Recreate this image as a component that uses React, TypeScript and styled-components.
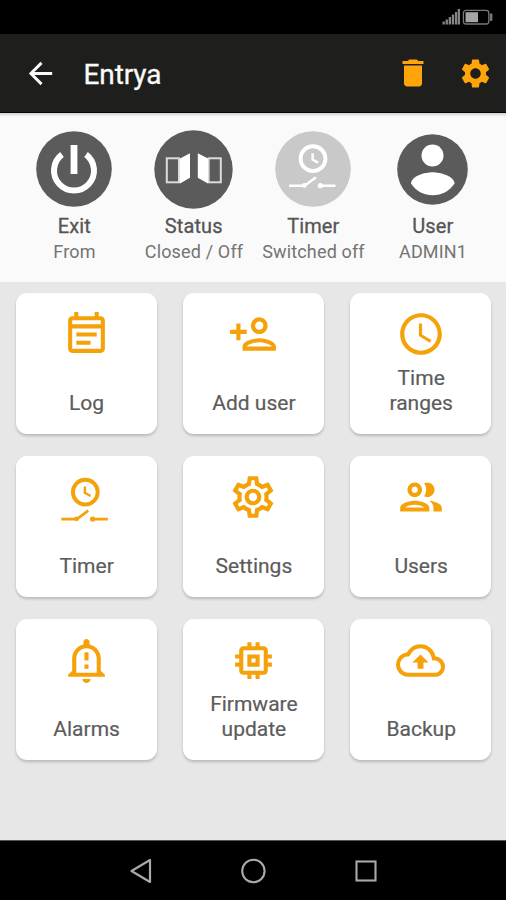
import React from "react";
import styled, { createGlobalStyle } from "styled-components";
import {
  MdArrowBack,
  MdDelete,
  MdSettings,
  MdOutlineEventNote,
  MdOutlinePersonAdd,
  MdAccessTime,
  MdOutlineSettings,
  MdOutlineNotificationImportant,
  MdOutlineMemory,
  MdOutlineBackup,
} from "react-icons/md";

const ORANGE = "#f5a10a";

const GlobalStyle = createGlobalStyle`
  * { box-sizing: border-box; }
  body { margin: 0; background: #e7e7e7; font-family: Roboto, "Liberation Sans", sans-serif; }
`;

const Screen = styled.div`
  display: flex;
  flex-direction: column;
  width: 506px;
  height: 900px;
  overflow: hidden;
  background: #e7e7e7;
`;

const StatusBar = styled.div`
  display: flex;
  justify-content: flex-end;
  align-items: center;
  flex: none;
  height: 34px;
  padding-right: 13px;
  background: #000;
`;

const Toolbar = styled.header`
  display: flex;
  align-items: center;
  flex: none;
  height: 79px;
  padding: 0 13px 0 22.5px;
  background: #1e1e1c;
  border-bottom: 1px solid #050505;
  color: #fafafa;
`;

const Title = styled.h1`
  flex: 1;
  margin: 3px 0 0 26px;
  font-size: 28px;
  font-weight: 400;
  line-height: 34px;
  letter-spacing: -0.1px;
  -webkit-text-stroke: 0.3px #fafafa;
`;

const Actions = styled.div`
  display: flex;
  align-items: center;
  gap: 27px;
  color: #ffa50a;
`;

const Summary = styled.section`
  display: grid;
  grid-template-columns: repeat(4, 119.5px);
  justify-content: center;
  flex: none;
  height: 169px;
  padding-top: 16px;
  background: linear-gradient(#cfcfcf, #fafafa 4px);
`;

const SummaryItem = styled.div`
  display: flex;
  flex-direction: column;
  align-items: center;
  white-space: nowrap;
`;

const BadgeSlot = styled.div`
  display: flex;
  align-items: center;
  justify-content: center;
  height: 80px;
`;

const SummaryLabel = styled.div`
  margin-top: 4px;
  padding-left: 1px;
  font-size: 20px;
  font-weight: 400;
  line-height: 26px;
  letter-spacing: 0.1px;
  color: #555;
  -webkit-text-stroke: 0.3px #555;
`;

const SummaryValue = styled.div`
  padding-left: 1.5px;
  font-size: 18px;
  line-height: 26px;
  letter-spacing: 0.15px;
  color: #747474;
`;

const Grid = styled.main`
  display: grid;
  grid-template-columns: repeat(3, 141px);
  grid-auto-rows: 141px;
  column-gap: 26.3px;
  row-gap: 22.2px;
  align-content: start;
  flex: 1;
  padding: 11px 0 0 15.6px;
`;

const Tile = styled.div`
  display: flex;
  flex-direction: column;
  align-items: center;
  justify-content: space-between;
  padding: 16px 10px 18px;
  border-radius: 11px;
  background: #fff;
  box-shadow: 0 2px 3px rgba(0, 0, 0, 0.2);
`;

const TileIcon = styled.div<{ $drop?: number }>`
  display: flex;
  align-items: center;
  justify-content: center;
  flex: none;
  height: 50px;
  margin-top: ${(p) => p.$drop ?? 0}px;
  color: ${ORANGE};
`;

const TileLabel = styled.div`
  max-width: 100px;
  padding-left: 1px;
  font-size: 21px;
  line-height: 25px;
  text-align: center;
  color: #5c5c5c;
  -webkit-text-stroke: 0.2px #5c5c5c;
`;

const NavBar = styled.nav`
  display: flex;
  align-items: center;
  justify-content: center;
  gap: 88px;
  flex: none;
  height: 60px;
  padding-left: 4px;
  background: #000;
  border-top: 1px solid #555;
`;

const SignalBattery = () => (
  <svg width="52" height="18" viewBox="0 0 52 18">
    <g fill="#858585">
      <rect x="1.5" y="13.5" width="2.3" height="3" />
      <rect x="4.6" y="11.5" width="2.3" height="5" />
      <rect x="7.7" y="9" width="2.3" height="7.5" />
      <rect x="10.8" y="6.5" width="2.3" height="10" />
      <rect x="13.9" y="4" width="2.3" height="12.5" />
      <rect x="16.7" y="1" width="2.3" height="15.5" />
    </g>
    <rect x="22.4" y="2.4" width="25.4" height="13.6" rx="2.5" fill="none" stroke="#777" strokeWidth="1.3" />
    <rect x="24.5" y="4.2" width="12.5" height="10" fill="#a5a5a5" />
    <rect x="48.8" y="5.5" width="2.6" height="7.5" rx="0.8" fill="#777" />
  </svg>
);

const PowerBadge = () => (
  <svg width="76" height="76" viewBox="0 0 76 76">
    <circle cx="38" cy="38" r="37.8" fill="#5b5b5b" />
    <path d="M26 23.5A20 20 0 1 0 50 23.5" fill="none" stroke="#fff" strokeWidth="6" />
    <rect x="34.6" y="14" width="6.8" height="29" fill="#fff" />
  </svg>
);

const DoorBadge = () => (
  <svg width="79" height="79" viewBox="0 0 79 79">
    <circle cx="39.5" cy="39.5" r="39.2" fill="#5b5b5b" />
    <g fill="none" stroke="#dcdcdc" strokeWidth="2">
      <rect x="12.8" y="28.3" width="12.2" height="24" />
      <rect x="54.6" y="28.3" width="12.2" height="24" />
    </g>
    <path d="M26 28.5 36 23.3V47.8L26 53.5Z" fill="#fff" />
    <path d="M54 28.5 43.8 23.3V47.8L54 53.5Z" fill="#fff" />
  </svg>
);

const TimerSwitch = () => (
  <g fill="none" stroke="currentColor">
    <circle cx="25" cy="14.7" r="12.4" strokeWidth="3.9" />
    <path d="M24.6 9.2V15.5L30.2 18.6" strokeWidth="2.4" />
    <path d="M1 41.7H16.5L28 33.2M32 41.7H47.5" strokeWidth="2.6" />
    <circle cx="16.3" cy="41.4" r="2.4" fill="currentColor" stroke="none" />
    <circle cx="32.3" cy="41.7" r="2.6" fill="currentColor" stroke="none" />
  </g>
);

const TimerIcon = () => (
  <svg width="50" height="50" viewBox="0.7 -0.4 50 50">
    <TimerSwitch />
  </svg>
);

const TimerBadge = () => (
  <svg width="76" height="76" viewBox="0 0 76 76" color="#fff">
    <circle cx="38" cy="38" r="37.8" fill="#c9c9c9" />
    <g transform="translate(13 13)">
      <TimerSwitch />
    </g>
  </svg>
);

const UserBadge = () => (
  <svg width="71" height="71" viewBox="0 0 71 71">
    <circle cx="35.5" cy="35.5" r="35.3" fill="#5b5b5b" />
    <circle cx="35.5" cy="21.5" r="11" fill="#fff" />
    <path d="M14 49.5C14.5 42 28 38.3 35.5 38.3S57 42 57.5 49.5A26 26 0 0 1 14 49.5Z" fill="#fff" />
  </svg>
);

const PeopleIcon = () => (
  <svg width="50" height="50" viewBox="0 0 24 24" fill="currentColor">
    <path d="M9 13.75c-2.34 0-7 1.17-7 3.5V19h14v-1.75c0-2.33-4.66-3.5-7-3.5zM4.34 17c.84-.58 2.87-1.25 4.66-1.25s3.82.67 4.66 1.25H4.34zM9 12c1.93 0 3.5-1.57 3.5-3.5S10.93 5 9 5 5.5 6.57 5.5 8.5 7.07 12 9 12zm0-5c.83 0 1.5.67 1.5 1.5S9.83 10 9 10s-1.5-.67-1.5-1.5S8.17 7 9 7zm7.04 6.81c1.16.84 1.96 1.96 1.96 3.44V19h4v-1.75c0-2.02-3.5-3.17-5.96-3.44zM15 12c1.93 0 3.5-1.57 3.5-3.5S16.93 5 15 5c-.54 0-1.04.13-1.5.35.63.89 1 1.98 1 3.15s-.37 2.26-1 3.15c.46.22.96.35 1.5.35z" />
  </svg>
);

const NavBack = () => (
  <svg width="22" height="26" viewBox="0 0 22 26">
    <path d="M1.5 13 20 2V24Z" fill="none" stroke="#aaa" strokeWidth="2.2" strokeLinejoin="round" />
  </svg>
);

const NavHome = () => (
  <svg width="26" height="26" viewBox="0 0 26 26">
    <circle cx="13.4" cy="13" r="11.2" fill="none" stroke="#aaa" strokeWidth="2.1" />
  </svg>
);

const NavRecent = () => (
  <svg width="26" height="26" viewBox="0 0 26 26">
    <rect x="2.5" y="3.5" width="19" height="19" fill="none" stroke="#aaa" strokeWidth="2.1" />
  </svg>
);

const summary = [
  { label: "Exit", value: "From", badge: <PowerBadge /> },
  { label: "Status", value: "Closed / Off", badge: <DoorBadge /> },
  { label: "Timer", value: "Switched off", badge: <TimerBadge /> },
  { label: "User", value: "ADMIN1", badge: <UserBadge /> },
];

const tiles = [
  { label: "Log", icon: <MdOutlineEventNote size={49} /> },
  { label: "Add user", icon: <MdOutlinePersonAdd size={50} /> },
  { label: "Time ranges", icon: <MdAccessTime size={50} /> },
  { label: "Timer", icon: <TimerIcon />, drop: 5 },
  { label: "Settings", icon: <MdOutlineSettings size={50} /> },
  { label: "Users", icon: <PeopleIcon /> },
  { label: "Alarms", icon: <MdOutlineNotificationImportant size={49} /> },
  { label: "Firmware update", icon: <MdOutlineMemory size={49} /> },
  { label: "Backup", icon: <MdOutlineBackup size={49} /> },
];

export default function App() {
  return (
    <>
      <GlobalStyle />
      <Screen>
        <StatusBar>
          <SignalBattery />
        </StatusBar>
        <Toolbar>
          <MdArrowBack size={35} />
          <Title>Entrya</Title>
          <Actions>
            <MdDelete size={36} />
            <MdSettings size={35} />
          </Actions>
        </Toolbar>
        <Summary>
          {summary.map((s) => (
            <SummaryItem key={s.label}>
              <BadgeSlot>{s.badge}</BadgeSlot>
              <SummaryLabel>{s.label}</SummaryLabel>
              <SummaryValue>{s.value}</SummaryValue>
            </SummaryItem>
          ))}
        </Summary>
        <Grid>
          {tiles.map((t) => (
            <Tile key={t.label}>
              <TileIcon $drop={t.drop}>{t.icon}</TileIcon>
              <TileLabel>{t.label}</TileLabel>
            </Tile>
          ))}
        </Grid>
        <NavBar>
          <NavBack />
          <NavHome />
          <NavRecent />
        </NavBar>
      </Screen>
    </>
  );
}
